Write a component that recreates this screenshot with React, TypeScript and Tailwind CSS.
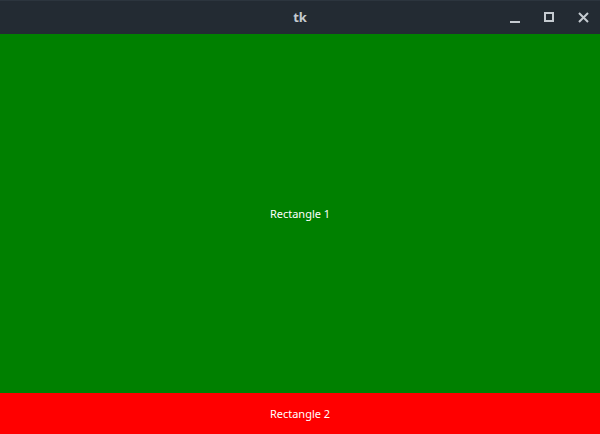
export default function App() {
  return (
    <div className="flex h-[434px] w-[600px] flex-col overflow-hidden font-['Noto_Sans',sans-serif]">
      {/* title bar */}
      <div className="relative flex h-[34px] shrink-0 items-center justify-center border-t border-[#2c353e] bg-[#232b33]">
        <span className="text-[13px] font-bold text-[#c5cbd1]">tk</span>
        <div className="absolute right-0 top-0 flex h-full items-center">
          <svg width="34" height="34" viewBox="0 0 34 34">
            <rect x="10" y="20" width="10" height="2" fill="#c5cbd1" />
          </svg>
          <svg width="34" height="34" viewBox="0 0 34 34">
            <rect x="11" y="12" width="8" height="8" fill="none" stroke="#c5cbd1" strokeWidth="2" />
          </svg>
          <svg width="32" height="34" viewBox="0 0 32 34">
            <path d="M11 12 L20 21 M20 12 L11 21" stroke="#c5cbd1" strokeWidth="2" />
          </svg>
        </div>
      </div>
      {/* rect 1 */}
      <div className="flex h-[359px] items-center justify-center bg-[#008000] pt-[1px]">
        <span className="text-[11px] text-white">Rectangle 1</span>
      </div>
      {/* rect 2 */}
      <div className="flex flex-1 items-center justify-center bg-[#ff0000] pt-[1px]">
        <span className="text-[11px] text-white">Rectangle 2</span>
      </div>
    </div>
  );
}
